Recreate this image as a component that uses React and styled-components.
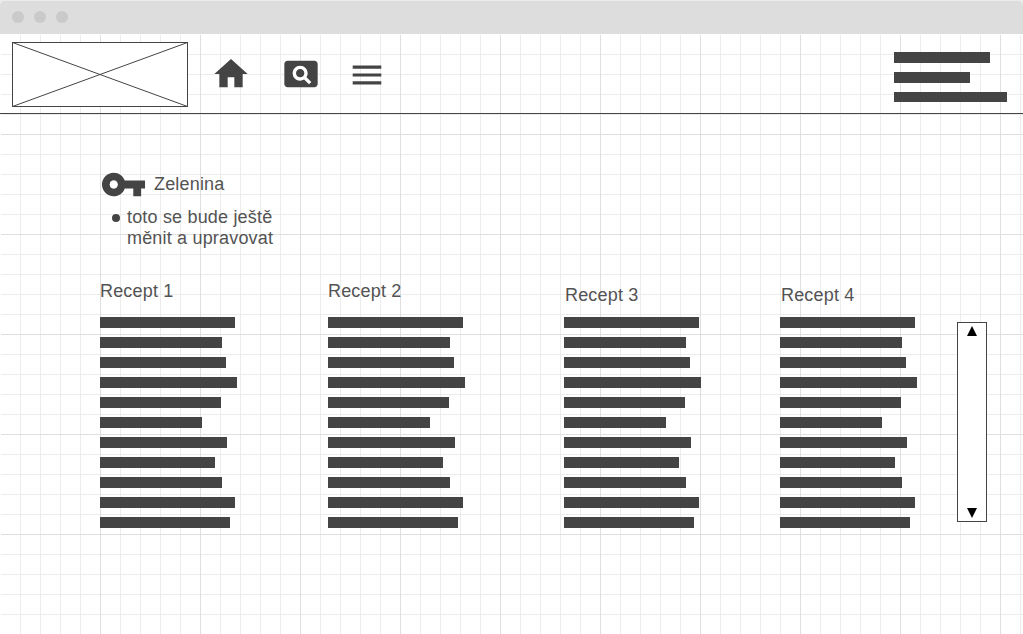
import React from "react";
import styled, { createGlobalStyle } from "styled-components";

const ink = "#444444";
const textColor = "#535353";

const GlobalStyle = createGlobalStyle`
  * { box-sizing: border-box; }
  body {
    margin: 0;
    overflow: hidden;
    background: #ffffff;
    color: ${textColor};
    font-family: "Liberation Sans", Arial, sans-serif;
    font-size: 18px;
    line-height: 21px;
    letter-spacing: 0.18px;
  }
  svg { display: block; flex: none; }
`;

const Window = styled.div`
  display: flex;
  flex-direction: column;
  width: 1023px;
  height: 634px;
  overflow: hidden;
`;

const TitleBar = styled.div`
  flex: none;
  height: 34px;
  padding-top: 1px;
  background: #ebebeb;
`;

const TitleBarInner = styled.div`
  display: flex;
  align-items: center;
  gap: 10px;
  height: 33px;
  padding: 0 12px 1px;
  background: #dddddd;
  border-radius: 5px 5px 0 0;
`;

const WindowDot = styled.span`
  width: 12px;
  height: 12px;
  border-radius: 50%;
  background: #cacaca;
`;

const Canvas = styled.div`
  flex: 1;
  border-top: 1px solid #ffffff;
  border-left: 1px solid #ffffff;
  background-color: #ffffff;
  background-image:
    linear-gradient(to right, transparent 99px, #dfdfdf 99px),
    linear-gradient(to bottom, transparent 99px, #dfdfdf 99px),
    linear-gradient(to right, transparent 19px, #ececec 19px),
    linear-gradient(to bottom, transparent 19px, #ececec 19px);
  background-size: 100px 100px, 100px 100px, 20px 20px, 20px 20px;
`;

const Header = styled.header`
  display: flex;
  align-items: flex-start;
  height: 79px;
  margin-left: -1px;
  padding: 7px 16px 0 12px;
  border-bottom: 1px solid ${ink};
`;

const Nav = styled.nav`
  display: flex;
  gap: 30px;
  margin: 12px 0 0 23px;
`;

const Bars = styled.div`
  display: flex;
  flex-direction: column;
  gap: 9px;
`;

const HeaderBars = styled(Bars)`
  width: 113px;
  margin: 10px 0 0 auto;
`;

const Bar = styled.div`
  width: ${(p) => p.$width}px;
  height: ${(p) => p.$height || 11}px;
  background: ${ink};
`;

const Intro = styled.section`
  height: 167px;
  padding: 46px 0 0 99px;
`;

const Topic = styled.div`
  display: flex;
  align-items: center;
  gap: 7px;
  height: 48px;
`;

const NoteList = styled.ul`
  margin: -1px 0 0;
  padding: 0;
  list-style: none;
`;

const Note = styled.li`
  display: flex;
  gap: 7px;
  padding-left: 12px;
`;

const Bullet = styled.span`
  flex: none;
  width: 8px;
  height: 8px;
  margin-top: 7px;
  border-radius: 50%;
  background: ${ink};
`;

const Content = styled.main`
  display: grid;
  grid-template-columns: 228px 236px 216px 177px 30px;
  padding-left: 99px;
`;

const RecipeTitle = styled.h2`
  height: 36px;
  margin: 0;
  padding: ${(p) => (p.$lowered ? "4px 0 0 1px" : "0")};
  font-size: 18px;
  font-weight: 400;
  line-height: 21px;
`;

const Scrollbar = styled.div`
  display: flex;
  flex-direction: column;
  justify-content: space-between;
  align-items: center;
  width: 30px;
  height: 200px;
  margin-top: 41px;
  padding: 3px 0;
  border: 1px solid ${ink};
  background: #ffffff;
`;

const lineWidths = [135, 122, 126, 137, 121, 102, 127, 115, 122, 135, 130];
const recipes = [
  { title: "Recept 1" },
  { title: "Recept 2" },
  { title: "Recept 3", lowered: true },
  { title: "Recept 4", lowered: true },
];

const Logo = () => (
  <svg width="176" height="65" viewBox="0 0 176 65" fill="#fff" stroke={ink}>
    <rect x="0.5" y="0.5" width="175" height="64" />
    <path d="M.5.5l175 64M175.5.5L.5 64.5" />
  </svg>
);

const HomeIcon = () => (
  <svg width="40" height="40" viewBox="0 0 24 24" fill={ink}>
    <path d="M10 20v-6h4v6h5v-8h3L12 3 2 12h3v8z" />
  </svg>
);

const PageSearchIcon = () => (
  <svg width="40" height="40" viewBox="0 0 24 24" fill={ink}>
    <path
      fill="#fff"
      d="M7 7h11.5v11.5H7z"
    />
    <path d="M11.5 9C10.12 9 9 10.12 9 11.5s1.12 2.5 2.5 2.5 2.5-1.12 2.5-2.5S12.88 9 11.5 9zM20 4H4c-1.1 0-2 .9-2 2v12c0 1.1.9 2 2 2h16c1.1 0 2-.9 2-2V6c0-1.1-.9-2-2-2zm-3.21 14.21l-2.91-2.91c-.69.44-1.51.7-2.39.7C9.01 16 7 13.99 7 11.5S9.01 7 11.5 7 16 9.01 16 11.5c0 .88-.26 1.69-.7 2.39l2.91 2.9-1.42 1.42z" />
  </svg>
);

const MenuIcon = () => (
  <svg width="32" height="40" viewBox="0 0 32 40" fill={ink}>
    <path d="M1.7 11.5h28.6v3.2H1.7zM1.7 19.4h28.6v3.2H1.7zM1.7 27.3h28.6v3.2H1.7z" />
  </svg>
);

const KeyIcon = () => (
  <svg width="47" height="47" viewBox="0 0 24 24" fill={ink}>
    <path d="M12.65 10C11.83 7.67 9.61 6 7 6c-3.31 0-6 2.69-6 6s2.69 6 6 6c2.61 0 4.83-1.67 5.65-4H17v4h4v-4h2v-4H12.65zM7 14c-1.1 0-2-.9-2-2s.9-2 2-2 2 .9 2 2-.9 2-2 2z" />
    <circle cx="7" cy="12" r="2" fill="#fff" />
  </svg>
);

const Arrow = ({ down }) => (
  <svg width="10" height="10" viewBox="0 0 10 10" fill="#000">
    <path d={down ? "M0 0h10L5 10z" : "M5 0l5 10H0z"} />
  </svg>
);

export default function App() {
  return (
    <Window>
      <GlobalStyle />
      <TitleBar>
        <TitleBarInner>
          <WindowDot />
          <WindowDot />
          <WindowDot />
        </TitleBarInner>
      </TitleBar>
      <Canvas>
        <Header>
          <Logo />
          <Nav>
            <HomeIcon />
            <PageSearchIcon />
            <MenuIcon />
          </Nav>
          <HeaderBars>
            <Bar $width={96} />
            <Bar $width={76} />
            <Bar $width={113} $height={10} />
          </HeaderBars>
        </Header>
        <Intro>
          <Topic>
            <KeyIcon />
            <span>Zelenina</span>
          </Topic>
          <NoteList>
            <Note>
              <Bullet />
              <span>
                toto se bude ještě
                <br />
                měnit a upravovat
              </span>
            </Note>
          </NoteList>
        </Intro>
        <Content>
          {recipes.map((r) => (
            <section key={r.title}>
              <RecipeTitle $lowered={r.lowered}>{r.title}</RecipeTitle>
              <Bars>
                {lineWidths.map((w, i) => (
                  <Bar key={i} $width={w} />
                ))}
              </Bars>
            </section>
          ))}
          <Scrollbar>
            <Arrow />
            <Arrow down />
          </Scrollbar>
        </Content>
      </Canvas>
    </Window>
  );
}
